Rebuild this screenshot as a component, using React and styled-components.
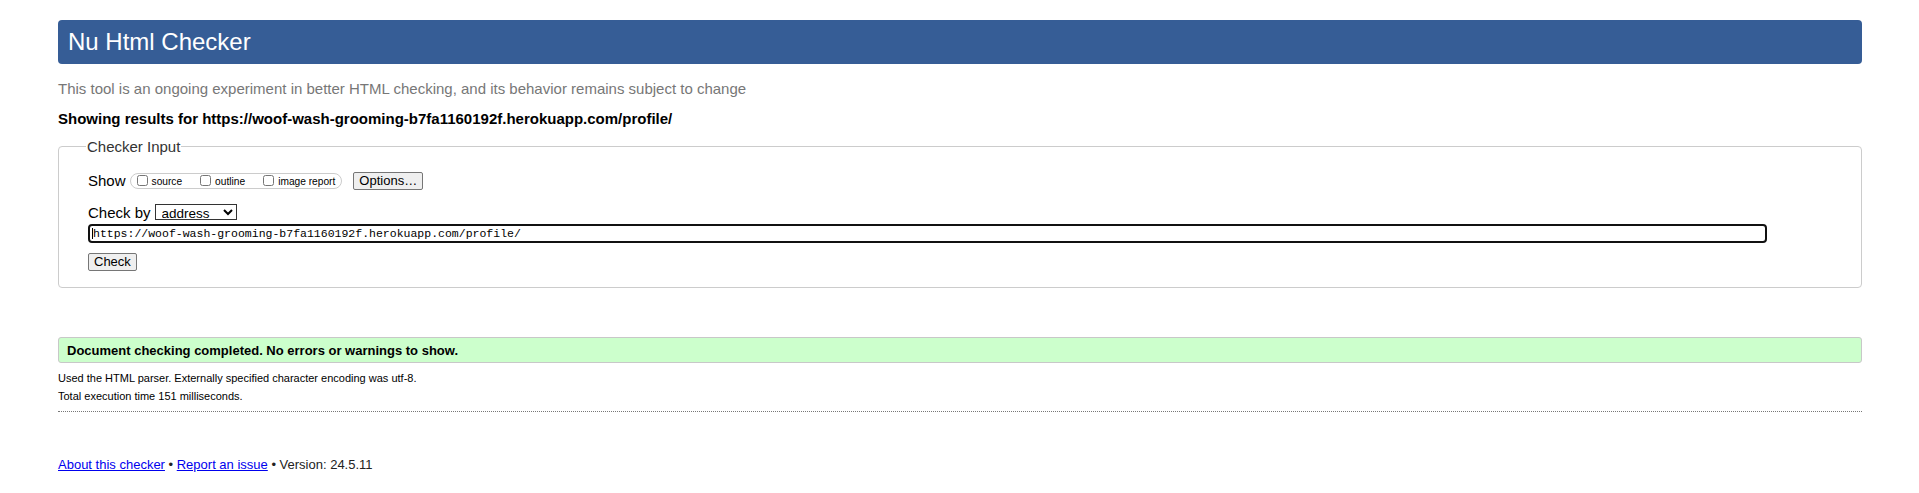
import styled, { createGlobalStyle } from 'styled-components'

const GlobalStyle = createGlobalStyle`
  html, body {
    margin: 0;
    padding: 0;
    background: #fff;
  }
  body {
    font-family: 'Liberation Sans', Arial, sans-serif;
    color: #000;
  }
`

function App() {
  return (
    <Page>
      <GlobalStyle />
      <Header>
        <Title>Nu Html Checker</Title>
      </Header>
      <Lead>This tool is an ongoing experiment in better HTML checking, and its behavior remains subject to change</Lead>
      <Results>Showing results for https://woof-wash-grooming-b7fa1160192f.herokuapp.com/profile/</Results>

      <Fieldset>
        <Legend>Checker Input</Legend>
        <Row>
          <RowLabel>Show</RowLabel>
          <Pill>
            <Option><Box type='checkbox' />source</Option>
            <Option><Box type='checkbox' />outline</Option>
            <Option $last><Box type='checkbox' />image report</Option>
          </Pill>
          <Button type='button' $left='11px'>Options…</Button>
        </Row>
        <Row $top='15px'>
          <RowLabel>Check by</RowLabel>
          <Select defaultValue='address'>
            <option value='address'>address</option>
            <option value='upload'>file upload</option>
            <option value='text'>text input</option>
          </Select>
        </Row>
        <InputWrap>
          <UrlInput readOnly value='https://woof-wash-grooming-b7fa1160192f.herokuapp.com/profile/' />
          <Caret />
        </InputWrap>
        <Button type='submit' $top='10px'>Check</Button>
      </Fieldset>

      <Success>Document checking completed. No errors or warnings to show.</Success>
      <Details $top='9px'>Used the HTML parser. Externally specified character encoding was utf-8.</Details>
      <Details $top='5px'>Total execution time 151 milliseconds.</Details>
      <Dotted />

      <Footer>
        <FooterLink href='#'>About this checker</FooterLink> • <FooterLink href='#'>Report an issue</FooterLink> • Version: 24.5.11
      </Footer>
    </Page>
  )
}

export default App

const Page = styled.div`
  padding: 20px 57px 20px 58px;
`

const Header = styled.header`
  display: flex;
  align-items: center;
  height: 44px;
  padding-left: 10px;
  background-color: #365d96;
  border-radius: 4px;
`

const Title = styled.h1`
  margin: 0;
  color: #fff;
  font-size: 24px;
  font-weight: normal;
  line-height: 1;
`

const Lead = styled.p`
  margin: 16px 0 0;
  color: #777;
  font-size: 15px;
  line-height: 17px;
`

const Results = styled.p`
  margin: 13px 0 0;
  font-size: 15px;
  font-weight: bold;
  line-height: 17px;
`

const Fieldset = styled.fieldset`
  margin: 11px 0 0;
  padding: 0 29px 16px;
  border: 1px solid #ccc;
  border-radius: 4px;
  min-width: 0;
`

const Legend = styled.legend`
  margin-left: -2px;
  padding: 0 1px;
  color: #333;
  font-size: 15px;
  line-height: 17px;
`

const Row = styled.div`
  display: flex;
  align-items: center;
  height: 17px;
  margin-top: ${p => p.$top || '17px'};
`

const RowLabel = styled.span`
  margin-right: 4px;
  font-size: 15px;
  line-height: 17px;
`

const Pill = styled.span`
  display: inline-flex;
  align-items: center;
  height: 14px;
  padding: 0 6px;
  border: 1px solid #ccc;
  border-radius: 8px;
`

const Option = styled.label`
  display: inline-flex;
  align-items: center;
  margin-right: ${p => (p.$last ? '0' : '18px')};
  font-size: 10.2px;
  line-height: 12px;
  padding-top: 2px;
`

const Box = styled.input`
  width: 11px;
  height: 11px;
  margin: -3px 4px 0 0;
`

const Button = styled.button`
  display: inline-block;
  margin: ${p => p.$top || '0'} 0 0 ${p => p.$left || '0'};
  height: 18px;
  padding: 0 5px;
  border: 1px solid #767676;
  border-radius: 2px;
  background: #efefef;
  color: #000;
  font-family: 'Liberation Sans', Arial, sans-serif;
  font-size: 13px;
  line-height: 16px;
`

const Select = styled.select`
  width: 82px;
  height: 16px;
  margin-top: -1px;
  padding: 0 0 0 2px;
  border: 1px solid #333;
  border-radius: 0;
  background: #fff;
  color: #000;
  font-family: 'Liberation Sans', Arial, sans-serif;
  font-size: 13.5px;
`

const InputWrap = styled.div`
  position: relative;
  margin-top: 3px;
  margin-right: 65px;
`

const UrlInput = styled.input`
  display: block;
  box-sizing: border-box;
  width: 100%;
  height: 19px;
  padding: 0 0 0 3px;
  border: 2px solid #111;
  border-radius: 4px;
  outline: none;
  font-family: 'Liberation Mono', 'DejaVu Sans Mono', monospace;
  font-size: 11.5px;
  color: #000;
`

const Caret = styled.span`
  position: absolute;
  left: 4px;
  top: 4px;
  width: 1px;
  height: 11px;
  background: #000;
`

const Success = styled.div`
  margin-top: 49px;
  box-sizing: border-box;
  height: 26px;
  padding: 0 8px;
  display: flex;
  align-items: center;
  background: #ccffcc;
  border: 1px solid #c8c8c8;
  border-radius: 3px;
  font-size: 13px;
  font-weight: bold;
`

const Details = styled.p`
  margin: ${p => p.$top} 0 0;
  font-size: 11px;
  line-height: 13px;
`

const Dotted = styled.hr`
  margin: 8px 0 0;
  height: 0;
  border: 0;
  border-top: 1px dotted #777;
`

const Footer = styled.p`
  margin: 45px 0 0;
  font-size: 13px;
  line-height: 15px;
  color: #222;
`

const FooterLink = styled.a`
  color: #00e;
  text-decoration: underline;
`
